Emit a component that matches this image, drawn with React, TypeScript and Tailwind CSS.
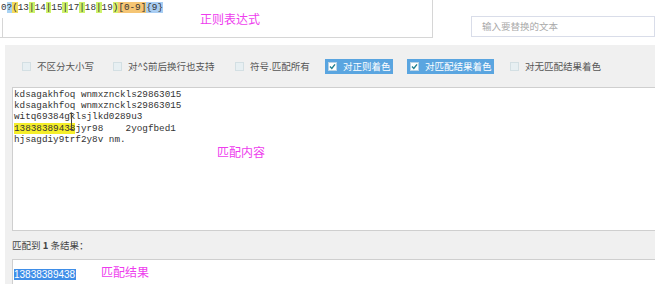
const mono = "font-['Liberation_Mono','Noto_Sans_CJK_SC',monospace]";
const cjk = "font-['Noto_Sans_CJK_SC','Liberation_Sans',sans-serif]";

const Tok = ({ t, bg }: { t: string; bg?: string }) => (
  <span className={bg}>{t}</span>
);

const Check = ({ checked }: { checked: boolean }) =>
  checked ? (
    <span className="flex h-[9px] w-[9px] items-center justify-center border border-[#b9d3e6] bg-white">
      <svg width="7" height="7" viewBox="0 0 7 7">
        <path d="M1 3.6 L2.8 5.4 L6 1.4" fill="none" stroke="#1f7f8f" strokeWidth="1.4" />
      </svg>
    </span>
  ) : (
    <span className="h-[9px] w-[9px] border border-[#d3dfe3] bg-[#e7eff2]" />
  );

const Option = ({
  label,
  checked,
  width,
}: {
  label: string;
  checked?: boolean;
  width: string;
}) => (
  <div className={`flex shrink-0 ${width}`}>
    {checked ? (
      <div className="flex h-[15px] items-center gap-[6px] bg-[#5aa5e0] pl-[3px] pr-[2px] text-white">
        <Check checked />
        <span>{label}</span>
      </div>
    ) : (
      <div className="flex h-[15px] items-center gap-[6px] text-[#555]">
        <Check checked={false} />
        <span>{label}</span>
      </div>
    )}
  </div>
);

export default function App() {
  return (
    <div className="relative h-[284px] w-[655px] overflow-hidden bg-white">
      {/* Top: regex box + replace input */}
      <div className="flex h-[45px]">
        <div className="relative flex h-[38px] w-[433px] flex-col border-b border-r border-[#d6d6d6]">
          <div className={`${mono} h-[18px] pl-[1px] pt-[2px] text-[9.3px] leading-[11px] whitespace-pre text-[#333]`}>
            <Tok t="0" />
            <Tok t="?" bg="bg-[#a9d3f3]" />
            <Tok t="(" bg="bg-[#f3dc5e]" />
            <Tok t="13" />
            <Tok t="|" bg="bg-[#cdf26a]" />
            <Tok t="14" />
            <Tok t="|" bg="bg-[#cdf26a]" />
            <Tok t="15" />
            <Tok t="|" bg="bg-[#cdf26a]" />
            <Tok t="17" />
            <Tok t="|" bg="bg-[#cdf26a]" />
            <Tok t="18" />
            <Tok t="|" bg="bg-[#cdf26a]" />
            <Tok t="19" />
            <Tok t=")" bg="bg-[#d6f06a]" />
            <Tok t="[0-9]" bg="bg-[#f5c574]" />
            <Tok t="{9}" bg="bg-[#a9cdf2]" />
          </div>
          <div className="ml-[2px] flex-1 border-l border-[#d6d6d6]" />
          <span className={`${cjk} absolute left-[200px] top-[11px] text-[12px] leading-[16px] text-[#ee3cee]`}>
            正则表达式
          </span>
        </div>
        <div className="ml-auto mt-[16px] flex h-[21px] w-[184px] items-center border border-[#d9dde9] bg-white pl-[10px]">
          <span className={`${cjk} text-[9.5px] text-[#aaa]`}>输入要替换的文本</span>
        </div>
      </div>

      {/* Gray panel */}
      <div className="ml-[5px] flex h-[239px] flex-col bg-[#f0f0f0]">
        <div className={`${cjk} flex h-[42px] items-center pl-[17px] pt-[1px] text-[9.5px]`}>
          <Option label="不区分大小写" width="w-[91px]" />
          <Option label="对^$前后换行也支持" width="w-[122px]" />
          <Option label="符号.匹配所有" width="w-[90px]" />
          <Option label="对正则着色" checked width="w-[82px]" />
          <Option label="对匹配结果着色" checked width="w-[103px]" />
          <Option label="对无匹配结果着色" width="w-[120px]" />
        </div>

        <div className="relative ml-[7px] h-[145px] border-y border-l border-[#cfcfcf] bg-white">
          <div className={`${mono} whitespace-pre pl-[1px] pt-[1px] text-[9.3px] leading-[11.3px] text-[#333]`}>
            <div>kdsagakhfoq wnmxznckls29863015</div>
            <div>kdsagakhfoq wnmxznckls29863015</div>
            <div>witq69384gklsjlkd0289u3</div>
            <div>
              <span className="bg-[#f5ee2a]">13838389438</span>jyr98    2yogfbed1
            </div>
            <div>hjsagdiy9trf2y8v nm.</div>
          </div>
          <svg className="absolute left-[56px] top-[25px]" width="5" height="17" viewBox="0 0 5 17">
            <path d="M0.5 0.5 H4.5 M2.5 0.5 V16.5 M0.5 16.5 H4.5" stroke="#444" strokeWidth="1" fill="none" />
          </svg>
          <span className={`${cjk} absolute left-[204px] top-[56px] text-[12px] leading-[16px] text-[#ee3cee]`}>
            匹配内容
          </span>
        </div>

        <div className={`${cjk} flex h-[28px] items-center pl-[7px] pt-[1px] text-[9.5px] text-[#444]`}>
          匹配到&nbsp;<b className="font-bold">1</b>&nbsp;条结果：
        </div>

        <div className="relative ml-[7px] flex-1 border-l border-t border-[#cfcfcf] bg-white">
          <span className="ml-[1px] mt-[1px] inline-block bg-[#3f8ee8] pr-[1px] font-['Liberation_Sans',sans-serif] text-[10px] leading-[11px] text-white">
            13838389438
          </span>
          <span className={`${cjk} absolute left-[88px] top-[4px] text-[12px] leading-[16px] text-[#ee3cee]`}>
            匹配结果
          </span>
        </div>
      </div>
    </div>
  );
}
